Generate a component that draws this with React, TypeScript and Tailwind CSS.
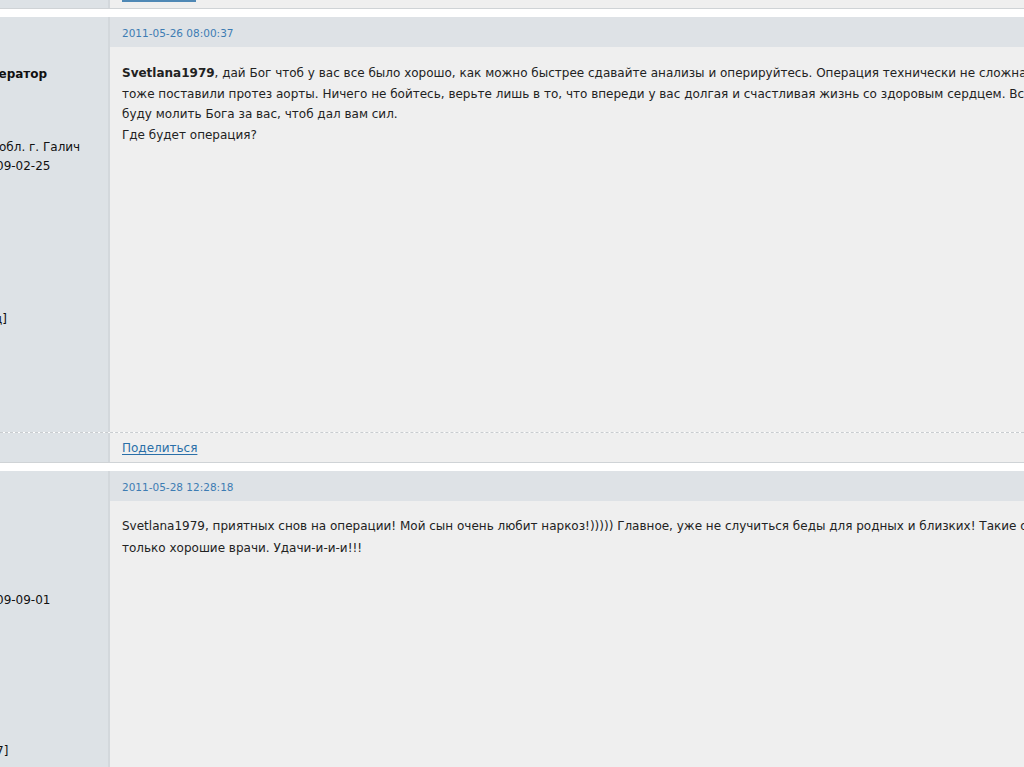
const font = { fontFamily: '"DejaVu Sans", Verdana, sans-serif' }

function Side({ children }: { children?: React.ReactNode }) {
  return (
    <div className="w-[110px] shrink-0 bg-[#dde2e6] border-r-2 border-[#d3d8dc] overflow-hidden">
      {children}
    </div>
  )
}

function Line({ children, className = '' }: { children: React.ReactNode; className?: string }) {
  return <div className={`whitespace-nowrap ${className}`}>{children}</div>
}

export default function App() {
  return (
    <div
      className="w-[1024px] h-[767px] overflow-hidden bg-white text-[12px] text-[#222]"
      style={font}
    >
      {/* tail of the previous post */}
      <div className="flex h-[9px] border-b border-[#cfd3d6]">
        <Side />
        <div className="flex-1 bg-[#efefef] pl-[12px]">
          <div className="w-[74px] h-[2px] bg-[#4f88b5]" />
        </div>
      </div>

      {/* post 1 */}
      <div className="mt-[8px] border-b border-[#cfd3d6]">
        <div className="flex h-[415px]">
          <Side>
            <div className="flex flex-col text-[12px] leading-[19px] text-[#111]">
              <Line className="mt-[48px] -ml-[20px] font-bold">Оператор</Line>
              <Line className="mt-[54px] -ml-[1px]">обл. г. Галич</Line>
              <Line className="-ml-[4px]">09-02-25</Line>
              <Line className="mt-[134px] -ml-[6px]">ц]</Line>
            </div>
          </Side>
          <div className="flex-1 flex flex-col bg-[#efefef] overflow-hidden">
            <div className="h-[30px] bg-[#dee2e6] pl-[12px] flex items-center pt-[3px] text-[10.5px] text-[#3d7cb3]">
              2011-05-26 08:00:37
            </div>
            <div className="pl-[12px] pt-[16px] leading-[20.7px]">
              <Line>
                <b>Svetlana1979</b>, дай Бог чтоб у вас все было хорошо, как можно быстрее сдавайте анализы и оперируйтесь. Операция технически не сложная, нам
              </Line>
              <Line>
                тоже поставили протез аорты. Ничего не бойтесь, верьте лишь в то, что впереди у вас долгая и счастливая жизнь со здоровым сердцем. Все
              </Line>
              <Line>буду молить Бога за вас, чтоб дал вам сил.</Line>
              <Line>Где будет операция?</Line>
            </div>
          </div>
        </div>
        <div className="flex h-[30px] border-t border-dashed border-[#c9cdd0]">
          <Side />
          <div className="flex-1 bg-[#efefef] pl-[12px] flex items-center">
            <a href="#" className="text-[#2a6fa8] underline underline-offset-2">
              Поделиться
            </a>
          </div>
        </div>
      </div>

      {/* post 2 */}
      <div className="mt-[8px] flex h-[300px]">
        <Side>
          <div className="flex flex-col text-[12px] leading-[19px] text-[#111]">
            <Line className="mt-[120px] -ml-[4px]">09-09-01</Line>
            <Line className="mt-[132px] -ml-[4px]">7]</Line>
          </div>
        </Side>
        <div className="flex-1 flex flex-col bg-[#efefef] overflow-hidden">
          <div className="h-[30px] bg-[#dee2e6] pl-[12px] flex items-center pt-[3px] text-[10.5px] text-[#3d7cb3]">
            2011-05-28 12:28:18
          </div>
          <div className="pl-[12px] pt-[14px] leading-[22px]">
            <Line>
              Svetlana1979, приятных снов на операции! Мой сын очень любит наркоз!))))) Главное, уже не случиться беды для родных и близких! Такие операции
            </Line>
            <Line>только хорошие врачи. Удачи-и-и-и!!!</Line>
          </div>
        </div>
      </div>
    </div>
  )
}
